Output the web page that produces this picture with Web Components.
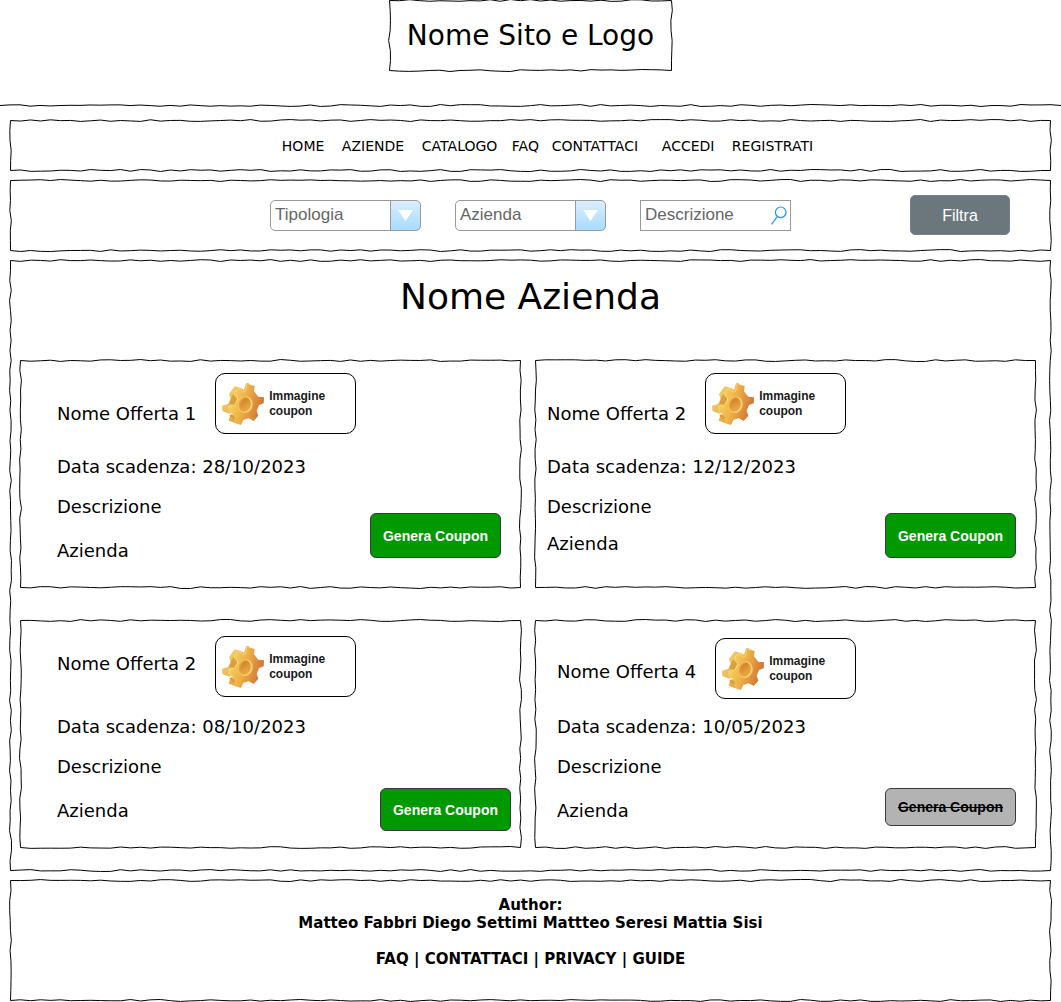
<!DOCTYPE html>
<html lang="it">
<head>
<meta charset="utf-8">
<meta name="viewport" content="width=device-width, initial-scale=1">
<title>Nome Sito - Coupon</title>
<style>
  body { margin: 0; background: #fff; color: #000; font-family: "DejaVu Sans", Verdana, sans-serif; }
</style>
</head>
<body>
<coupon-page></coupon-page>

<script>
/* Hand-drawn stroke: one vertex every 10px, each nudged at most one pixel off the line. */
function wobble(x1, y1, x2, y2, rand) {
  const len = Math.hypot(x2 - x1, y2 - y1);
  const n = Math.max(1, Math.round(len / 10));
  const nx = (y2 - y1) / (len || 1), ny = (x2 - x1) / (len || 1);
  let d = '';
  for (let i = 1; i < n; i++) {
    const off = (rand() - 0.5) * 2;
    d += ` L${(x1 + (x2 - x1) * i / n + nx * off).toFixed(2)} ${(y1 + (y2 - y1) * i / n + ny * off).toFixed(2)}`;
  }
  return d + ` L${x2} ${y2}`;
}
function seeded(seed) {
  let s = seed * 7919 + 17;
  return () => { s = (s * 1103515245 + 12345) % 2147483648; return s / 2147483648; };
}

class RoughFrame extends HTMLElement {
  constructor() {
    super();
    this.attachShadow({ mode: 'open' }).innerHTML = `
      <style>
        :host { display: block; position: relative; box-sizing: border-box; }
        svg { position: absolute; inset: 0; width: 100%; height: 100%; overflow: visible; pointer-events: none; }
        path { fill: none; stroke: #000; stroke-width: 1; }
      </style>
      <slot></slot>
      <svg aria-hidden="true"><path></path></svg>`;
  }
  connectedCallback() {
    this.observer = new ResizeObserver(() => this.draw());
    this.observer.observe(this);
    this.draw();
  }
  disconnectedCallback() { this.observer.disconnect(); }
  draw() {
    const w = this.offsetWidth - 0.5, h = this.offsetHeight - 0.5;
    if (w < 1) return;
    const r = seeded(Number(this.getAttribute('seed') || 1));
    this.shadowRoot.querySelector('path').setAttribute('d', this.hasAttribute('line')
      ? 'M0 0.5' + wobble(0, 0.5, w + 0.5, 0.5, r)
      : 'M0.5 0.5' + wobble(0.5, 0.5, w, 0.5, r) + wobble(w, 0.5, w, h, r) +
        wobble(w, h, 0.5, h, r) + wobble(0.5, h, 0.5, 0.5, r) + ' Z');
  }
}
customElements.define('rough-frame', RoughFrame);

class SiteHeader extends HTMLElement {
  constructor() {
    super();
    this.attachShadow({ mode: 'open' }).innerHTML = `
      <style>
        :host { display: flex; flex-direction: column; gap: 34px; }
        .logo { align-self: center; padding: 18px; }
        h1 { margin: 0; font-size: 28px; line-height: 35px; font-weight: 400; }
        .rule { height: 1px; }
      </style>
      <rough-frame class="logo" seed="3"><h1><slot></slot></h1></rough-frame>
      <rough-frame class="rule" line seed="5"></rough-frame>`;
  }
}
customElements.define('site-header', SiteHeader);

class SiteNav extends HTMLElement {
  constructor() {
    super();
    this.attachShadow({ mode: 'open' }).innerHTML = `
      <style>
        :host { display: block; }
        nav { display: grid; grid-template-columns: 60px 80px 90px 40px 110px 70px auto;
              justify-content: center; padding: 17px 0 16px 34px; font-size: 14px; line-height: 18px; }
        a { color: #000; text-decoration: none; }
      </style>
      <rough-frame seed="7"><nav>
        <a href="#home">HOME</a><a href="#aziende">AZIENDE</a><a href="#catalogo">CATALOGO</a>
        <a href="#faq">FAQ</a><a href="#contatti">CONTATTACI</a><a href="#accedi">ACCEDI</a>
        <a href="#registrati">REGISTRATI</a>
      </nav></rough-frame>`;
  }
}
customElements.define('site-nav', SiteNav);

class DropDown extends HTMLElement {
  constructor() {
    super();
    const label = this.getAttribute('label');
    this.attachShadow({ mode: 'open' }).innerHTML = `
      <style>
        :host { display: block; position: relative; width: 151px; }
        select { appearance: none; display: block; box-sizing: border-box; width: 100%; height: 31px;
          margin: 0; padding: 0 32px 2px 4px; border: 1px solid #999; border-radius: 5px; color: #666;
          font: 17px "Liberation Sans", Arial, sans-serif;
          background: linear-gradient(#999, #999) right 29px top / 1px 100% no-repeat,
                      linear-gradient(#dbecff, #a8dcff) right / 29px 100% no-repeat, #fff; }
        svg { position: absolute; right: 8px; top: 10px; width: 15px; height: 11px; pointer-events: none; }
      </style>
      <select aria-label="${label}"><option>${label}</option></select>
      <svg viewBox="0 0 15 11" aria-hidden="true"><path d="M0 0H15L7.500 11Z" fill="#fff"/></svg>`;
  }
}
customElements.define('drop-down', DropDown);

class SearchBox extends HTMLElement {
  constructor() {
    super();
    const label = this.getAttribute('label');
    this.attachShadow({ mode: 'open' }).innerHTML = `
      <style>
        :host { display: block; position: relative; width: 151px; }
        input { appearance: none; display: block; box-sizing: border-box; width: 100%; height: 31px;
          margin: 0; padding: 0 26px 0 4px; border: 1px solid #999; border-radius: 0; background: #fff;
          color: #666; font: 17px "Liberation Sans", Arial, sans-serif; }
        input::placeholder { color: #666; opacity: 1; }
        svg { position: absolute; right: 4px; top: 6px; width: 16px; height: 19px; pointer-events: none; }
      </style>
      <input type="text" aria-label="${label}" placeholder="${label}">
      <svg viewBox="0 0 16 19" fill="none" stroke="#1e90ff" stroke-width="1.2" aria-hidden="true">
        <circle cx="9.700" cy="6.300" r="5.300"/><path d="M6.400 10.500L0.500 18.300"/></svg>`;
  }
}
customElements.define('search-box', SearchBox);

class FilterBar extends HTMLElement {
  constructor() {
    super();
    this.attachShadow({ mode: 'open' }).innerHTML = `
      <style>
        :host { display: block; }
        form { display: flex; justify-content: flex-end; align-items: center; gap: 34px;
               margin: 0; padding: 15px 41px 16px 16px; }
        button { width: 100px; height: 40px; margin: 0 0 0 85px; padding: 2px 0 0; border: 1px solid #76838a;
          border-radius: 5px; background: #6c777d; color: #fff;
          font: 16px "Liberation Sans", Arial, sans-serif; }
      </style>
      <rough-frame seed="9"><form>
        <drop-down label="Tipologia"></drop-down>
        <drop-down label="Azienda"></drop-down>
        <search-box label="Descrizione"></search-box>
        <button type="button">Filtra</button>
      </form></rough-frame>`;
  }
}
customElements.define('filter-bar', FilterBar);

class CouponImage extends HTMLElement {
  constructor() {
    super();
    this.attachShadow({ mode: 'open' }).innerHTML = `
      <style>
        :host { display: flex; align-items: center; gap: 5px; box-sizing: border-box; width: 141px; height: 61px;
          padding: 0 6px; border: 1px solid #000; border-radius: 10px; background: #fff; color: #1a1a1a;
          font: bold 12px/15px "Liberation Sans", Arial, sans-serif; }
        svg { flex: none; width: 42px; height: 42px; }
        span { width: 70px; }
      </style>
      <svg viewBox="0 0 126 126" aria-hidden="true">
        <defs>
          <linearGradient id="face" x1="0" y1="0.300" x2="1" y2="0.650">
            <stop offset="0" stop-color="#fbd865"/><stop offset="0.450" stop-color="#eeb047"/>
            <stop offset="0.800" stop-color="#d9853a"/><stop offset="1" stop-color="#c9672d"/></linearGradient>
          <linearGradient id="side" x1="0" y1="0" x2="1" y2="1">
            <stop offset="0" stop-color="#f8dc7c"/><stop offset="1" stop-color="#d8922f"/></linearGradient>
          <linearGradient id="hole" x1="0" y1="0" x2="1" y2="1">
            <stop offset="0" stop-color="#c97a28"/><stop offset="1" stop-color="#f0ae45"/></linearGradient>
        </defs>
        <path fill="url(#side)" d="M66 20L72 1L80 0L88 20L60 36L46 48L40 66L22 92L1 84L0 68L18 63L26 48L21 33L38 10L56 15ZM42 94L38 119L20 113L25 96Z"/>
        <path fill="#d9a03c" d="M34 32L27 46L22 62L38 66L46 48ZM22 98L28 93L40 103L34 110Z"/>
        <path fill="url(#face)" d="M74 2L98 9L96 25L109 41L126 43L125 61L111 66L104 83L109 98L95 114L80 106L64 111L57 126L35 119L39 103L30 91L20 91L18 71L38 66L48 48L36 34L44 20L54 17L63 27L71 24Z"/>
        <path fill="none" stroke="#fbe08a" stroke-width="2" d="M18 71L38 66L48 48L36 34L44 20L54 17L63 27L71 24L74 2"/>
        <ellipse cx="70" cy="65" rx="22" ry="25" fill="#f7d16b" transform="rotate(20 70 65)"/>
        <ellipse cx="68" cy="64" rx="18" ry="22" fill="#e6a23d" transform="rotate(20 68 64)"/>
        <ellipse cx="69" cy="63" rx="13" ry="19" fill="url(#hole)" transform="rotate(24 69 63)"/>
      </svg>
      <span><slot></slot></span>`;
  }
}
customElements.define('coupon-image', CouponImage);

class CouponCard extends HTMLElement {
  constructor() {
    super();
    const off = this.hasAttribute('expired');
    this.attachShadow({ mode: 'open' }).innerHTML = `
      <style>
        :host { display: block; font-size: 18px; line-height: 22px; }
        rough-frame { height: 100%; padding: 0 var(--action-right, 20px) 0 var(--inset, 37px); }
        .head { display: flex; align-items: flex-start; gap: 19px; min-height: 96px; }
        h3 { margin: 0; padding-top: var(--name-top, 43px); font: inherit; }
        coupon-image { margin-top: var(--image-top, 13px); }
        .body { display: flex; justify-content: space-between; align-items: flex-start; }
        .text { padding-bottom: 26px; }
        p { margin: 0; }
        .about { margin-top: 18px; }
        .company { margin-top: var(--company-gap, 22px); }
        button { width: 131px; height: var(--action-height, 45px); margin: var(--action-top, 57px) 0 0; padding: 0;
          border: 1px solid #36393d; border-radius: 6px; background: #009900; color: #fff;
          font: bold 14px "Liberation Sans", Arial, sans-serif; }
        button:disabled { background: #b3b3b3; color: #000; text-decoration: line-through; }
      </style>
      <rough-frame seed="${this.getAttribute('seed')}">
        <div class="head"><h3><slot name="title"></slot></h3><coupon-image>Immagine coupon</coupon-image></div>
        <div class="body">
          <div class="text"><p>Data scadenza: <slot name="date"></slot></p><p class="about">Descrizione</p><p class="company">Azienda</p></div>
          <button type="button"${off ? ' disabled' : ''}>Genera Coupon</button>
        </div>
      </rough-frame>`;
  }
}
customElements.define('coupon-card', CouponCard);

class CompanyOffers extends HTMLElement {
  constructor() {
    super();
    this.attachShadow({ mode: 'open' }).innerHTML = `
      <style>
        :host { display: block; }
        rough-frame { padding: 15px 15px 23px 10px; }
        h2 { margin: 0 0 41px 5px; font-size: 36px; line-height: 44px; font-weight: 400; text-align: center; }
        .grid { display: grid; grid-template-columns: 1fr 1fr; gap: 32px 14px; }
      </style>
      <rough-frame seed="11"><h2><slot name="heading"></slot></h2><div class="grid"><slot></slot></div></rough-frame>`;
  }
}
customElements.define('company-offers', CompanyOffers);

class SiteFooter extends HTMLElement {
  constructor() {
    super();
    this.attachShadow({ mode: 'open' }).innerHTML = `
      <style>
        :host { display: block; text-align: center; font-size: 15px; line-height: 18px; font-weight: 700; }
        rough-frame { padding: 16px 16px 33px; }
        p { margin: 0; }
        nav { margin-top: 18px; }
        a { color: inherit; text-decoration: none; }
      </style>
      <rough-frame seed="13">
        <p>Author:</p>
        <p>Matteo Fabbri Diego Settimi Mattteo Seresi Mattia Sisi</p>
        <nav><a href="#faq">FAQ</a> | <a href="#contatti">CONTATTACI</a> | <a href="#privacy">PRIVACY</a> | <a href="#guide">GUIDE</a></nav>
      </rough-frame>`;
  }
}
customElements.define('site-footer', SiteFooter);

class CouponPage extends HTMLElement {
  constructor() {
    super();
    this.attachShadow({ mode: 'open' }).innerHTML = `
      <style>
        :host { display: flex; flex-direction: column; gap: 14px; padding-bottom: 1px; }
        main { display: flex; flex-direction: column; gap: 9px; padding: 0 10px; }
        .second { --inset: 12px; --company-gap: 15px; }
        .third { --name-top: 33px; --image-top: 16px; --action-right: 10px; --action-top: 72px; --action-height: 43px; }
        .fourth { --inset: 22px; --name-top: 41px; --image-top: 18px; --action-top: 72px; --action-height: 38px; }
      </style>
      <site-header>Nome Sito e Logo</site-header>
      <main>
        <site-nav></site-nav>
        <filter-bar></filter-bar>
        <company-offers>
          <span slot="heading">Nome Azienda</span>
          <coupon-card seed="21"><span slot="title">Nome Offerta 1</span><span slot="date">28/10/2023</span></coupon-card>
          <coupon-card seed="22" class="second"><span slot="title">Nome Offerta 2</span><span slot="date">12/12/2023</span></coupon-card>
          <coupon-card seed="23" class="third"><span slot="title">Nome Offerta 2</span><span slot="date">08/10/2023</span></coupon-card>
          <coupon-card seed="24" class="fourth" expired><span slot="title">Nome Offerta 4</span><span slot="date">10/05/2023</span></coupon-card>
        </company-offers>
        <site-footer></site-footer>
      </main>`;
  }
}
customElements.define('coupon-page', CouponPage);
</script>
</body>
</html>
